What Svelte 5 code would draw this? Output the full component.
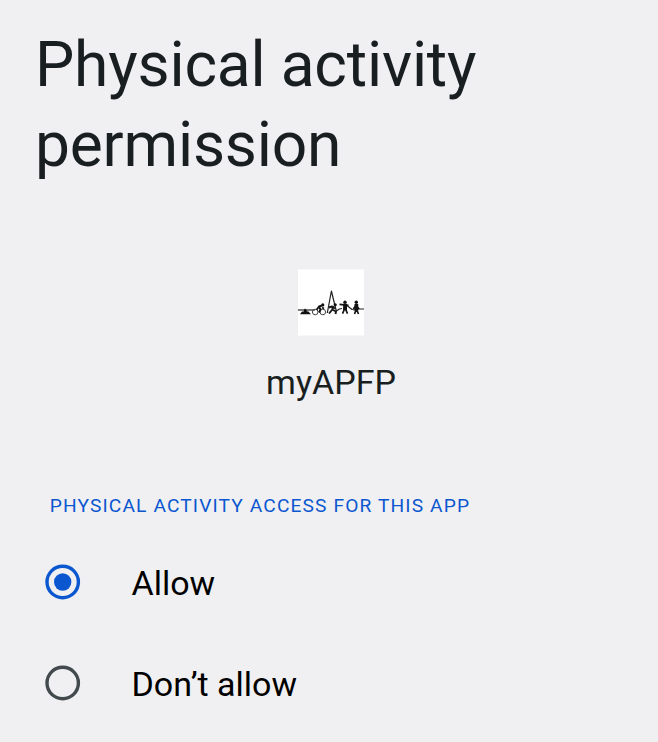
<script>
  let selected = $state('Allow');
  const options = ['Allow', 'Don’t allow'];
</script>

<main>
  <h1>Physical activity<br />permission</h1>
  <section class="app">
    <svg width="66" height="67" viewBox="0 0 66 67" aria-hidden="true">
      <rect y=".5" width="66" height="66" fill="#fff" />
      <g fill="none" stroke="#151515" stroke-linejoin="round">
        <path stroke="#333" stroke-width="1.3" d="M0 41H17" />
        <g stroke="#444" stroke-width="1">
          <circle cx="17.2" cy="43" r="2.8" />
          <circle cx="24.8" cy="43" r="2.8" />
        </g>
        <path stroke-width="1.9" d="M18.5 41L21 37.5L24 36.5M21 37.5L22.5 40.5L21 43.5M24 38.5L26 39.5" />
        <path stroke="#222" stroke-width="1.2" d="M29.3 44L33.4 22L38.3 42L41.5 40L44 39.5M49 36.5L54 40.5L57 41M60 40H66" />
        <path stroke-width="1.9" d="M31 38.5L34 37.5L37 39.5M35.5 37L34 41L31 44.5M34 40.5L38 42.5L37.5 45" />
        <path stroke-width="1.7" d="M41.5 35.3L50.5 36.4M46.5 40L44.5 44.7M47.5 40L49.5 44.7" />
        <path stroke-width="1.7" d="M55.3 40L58 36.5L61.2 40M58 41L56.5 45M58.8 41L60.5 45" />
      </g>
      <g fill="#111">
        <path d="M2 45.3L4.2 42.3L5.2 43L6.8 39.5L8.4 40.4L8.8 42.3L10.5 42.4L12.9 45.3Z" />
        <circle cx="24.8" cy="35.9" r="1.6" />
        <circle cx="37.2" cy="35.8" r="1.6" />
        <circle cx="47" cy="33.2" r="1.7" />
        <path d="M45.2 34.7H49L49 41.2H45Z" />
        <circle cx="58.3" cy="33.2" r="1.7" />
        <path d="M56.5 34.9H60.2L60.4 41.5H56.3Z" />
      </g>
    </svg>
    <span>myAPFP</span>
  </section>
  <h2>PHYSICAL ACTIVITY ACCESS FOR THIS APP</h2>
  <div class="options" role="radiogroup">
    {#each options as option}
      <button role="radio" aria-checked={selected === option} onclick={() => (selected = option)}>
        <svg class="radio" class:checked={selected === option} width="36" height="36" viewBox="0 0 36 36" aria-hidden="true">
          <circle cx="17.7" cy="18" r="15.7" fill="none" stroke="currentColor" stroke-width="3.4" />
          {#if selected === option}
            <circle cx="17.7" cy="18" r="8.7" fill="currentColor" />
          {/if}
        </svg>
        <span>{option}</span>
      </button>
    {/each}
  </div>
</main>

<style>
  :global(body) { background: #f0f0f2; }
  main { box-sizing: border-box; height: 742px; padding: 25px 0 0 35px; overflow: hidden; font-family: Roboto, sans-serif; background: #f0f0f2; color: #191e20; }
  h1 { margin: 0; font-size: 62.3px; line-height: 79.5px; font-weight: 400; letter-spacing: -.2px; white-space: nowrap; }
  .app { display: flex; flex-direction: column; align-items: center; margin: 85px 31px 0 0; }
  svg { display: block; }
  .app span { margin-top: 25px; font-size: 34px; line-height: 42px; }
  h2 { margin: 91px 0 0 14.7px; font-size: 19.2px; line-height: 24px; font-weight: 400; letter-spacing: 1.12px; color: #0b57d0; white-space: nowrap; }
  .options { display: flex; flex-direction: column; margin-top: 13px; }
  button { display: flex; align-items: center; gap: 50.5px; height: 101px; padding: 0 0 0 10px; border: 0; background: none; font: 34px Roboto, sans-serif; color: #000; text-align: left; }
  button span { padding-top: 2px; }
  .radio { color: #434a4e; }
  .radio.checked { color: #0b57d0; }
</style>
